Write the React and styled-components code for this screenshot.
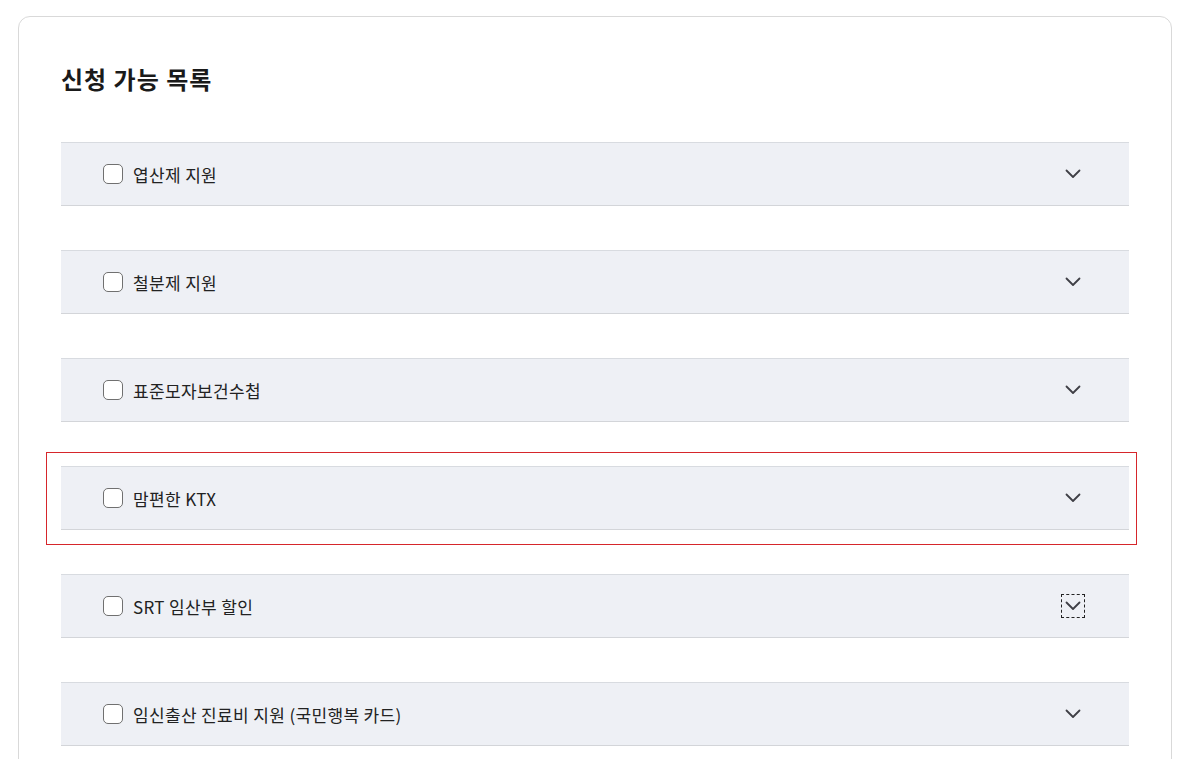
import React from "react";
import styled, { createGlobalStyle } from "styled-components";

const Global = createGlobalStyle`
  html, body { margin: 0; padding: 0; background: #fff; }
  body { font-family: "Noto Sans CJK KR", "Noto Sans", sans-serif; color: #222; }
`;

const Page = styled.div`
  padding: 16px 28px 0 18px;
`;

const Card = styled.section`
  border: 1px solid #d9d9d9;
  border-radius: 12px;
  padding: 46px 42px 40px 42px;
  min-height: 760px;
  box-sizing: border-box;
`;

const Title = styled.h2`
  margin: 0 0 47px 0;
  font-size: 24px;
  line-height: 32px;
  font-weight: 700;
  color: #1a1a1a;
  letter-spacing: 1px;
`;

const List = styled.div`
  display: flex;
  flex-direction: column;
  gap: 44px;
`;

const ItemWrap = styled.div`
  position: relative;
`;

const Highlight = styled.div`
  position: absolute;
  left: -15px;
  right: -8px;
  top: -14px;
  bottom: -15px;
  border: 1px solid #d6262b;
  pointer-events: none;
`;

const Row = styled.div`
  height: 64px;
  box-sizing: border-box;
  background: #eef0f5;
  border-top: 1px solid #d8dbe0;
  border-bottom: 1px solid #d3d5d9;
  display: flex;
  align-items: center;
  padding: 0 44px 0 42px;
`;

const Label = styled.label`
  display: flex;
  align-items: center;
  gap: 10px;
  flex: 1;
  font-size: 17px;
  color: #222;
  letter-spacing: 0.35px;
`;

const Box = styled.span`
  width: 20px;
  height: 20px;
  border: 1px solid #707070;
  border-radius: 5px;
  background: #fff;
  box-sizing: border-box;
`;

const Toggle = styled.span`
  width: 24px;
  height: 24px;
  box-sizing: border-box;
  display: flex;
  align-items: center;
  justify-content: center;
  border: ${(p) => (p.$focused ? "1.5px dashed #222" : "1.5px solid transparent")};
`;

const Chevron = () => (
  <svg width="16" height="10" viewBox="0 0 16 10" fill="none">
    <path d="M1.5 1.5 L8 8 L14.5 1.5" stroke="#3f3f46" strokeWidth="1.8" strokeLinecap="round" strokeLinejoin="round" />
  </svg>
);

const items = [
  { name: "엽산제 지원" },
  { name: "철분제 지원" },
  { name: "표준모자보건수첩" },
  { name: "맘편한 KTX", highlight: true },
  { name: "SRT 임산부 할인", focused: true },
  { name: "임신출산 진료비 지원 (국민행복 카드)" },
];

export default function App() {
  return (
    <Page>
      <Global />
      <Card>
        <Title>신청 가능 목록</Title>
        <List>
          {items.map((it) => (
            <ItemWrap key={it.name}>
              {it.highlight && <Highlight />}
              <Row>
                <Label>
                  <Box />
                  {it.name}
                </Label>
                <Toggle $focused={it.focused}>
                  <Chevron />
                </Toggle>
              </Row>
            </ItemWrap>
          ))}
        </List>
      </Card>
    </Page>
  );
}
